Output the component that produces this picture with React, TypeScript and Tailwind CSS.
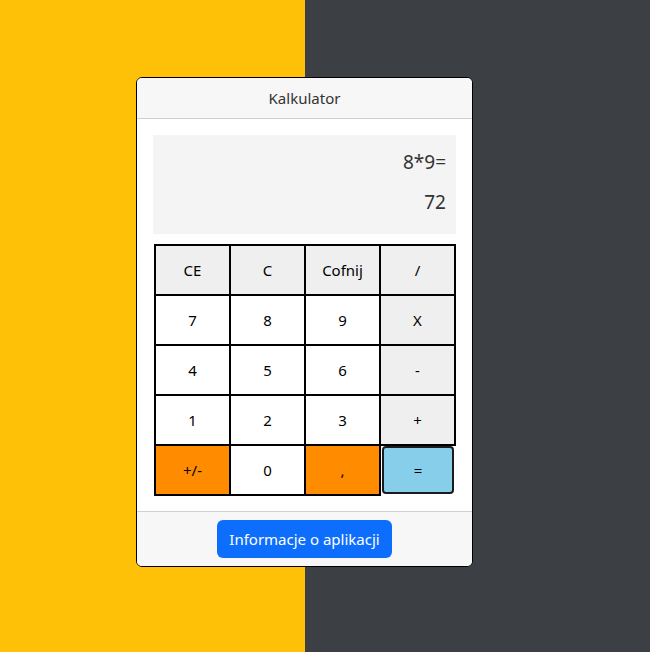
const keys = [
  { label: "CE", kind: "op" },
  { label: "C", kind: "op" },
  { label: "Cofnij", kind: "op" },
  { label: "/", kind: "op" },
  { label: "7", kind: "num" },
  { label: "8", kind: "num" },
  { label: "9", kind: "num" },
  { label: "X", kind: "op" },
  { label: "4", kind: "num" },
  { label: "5", kind: "num" },
  { label: "6", kind: "num" },
  { label: "-", kind: "op" },
  { label: "1", kind: "num" },
  { label: "2", kind: "num" },
  { label: "3", kind: "num" },
  { label: "+", kind: "op" },
  { label: "+/-", kind: "special" },
  { label: "0", kind: "num" },
  { label: ",", kind: "special" },
  { label: "=", kind: "equals" },
];

const kindClass: Record<string, string> = {
  op: "bg-[#efefef] border border-black outline outline-1 outline-black",
  num: "bg-white border border-black outline outline-1 outline-black",
  special: "bg-[#ff8c00] border border-black outline outline-1 outline-black",
  equals: "bg-[#87ceeb] border-2 border-[#1b1b1b] rounded-[4px] m-[1px] ml-[2px]",
};

export default function App() {
  return (
    <div
      className="w-[650px] h-[652px] pl-[136px] pt-[77px] bg-[linear-gradient(to_right,#ffc107_305px,#3c4044_305px)]"
      style={{ fontFamily: '"Noto Sans", "Open Sans", sans-serif' }}
    >
      <div className="w-[337px] h-[490px] flex flex-col bg-white border border-black rounded-[6px] overflow-hidden">
        <div className="h-[41px] flex items-center justify-center bg-[#f7f7f7] border-b border-[#cfcfcf] text-[15px] text-[#333]">
          Kalkulator
        </div>
        <div className="flex flex-col p-4">
          <div className="h-[99px] bg-[#f4f4f4] flex flex-col items-end justify-center gap-[12px] pr-[10px] pb-[6px] text-[19px] text-[#333]">
            <div className="leading-[28px]">8*9=</div>
            <div className="leading-[28px]">72</div>
          </div>
          <div className="grid grid-cols-[repeat(4,75px)] grid-rows-[repeat(5,50px)] mt-[11px] mx-[2px]">
            {keys.map((k) => (
              <button
                key={k.label}
                className={`flex items-center justify-center text-[15px] text-black ${kindClass[k.kind]}`}
              >
                {k.label}
              </button>
            ))}
          </div>
        </div>
        <div className="flex-1 flex items-center justify-center bg-[#f7f7f7] border-t border-[#cfcfcf]">
          <button className="h-[38px] px-3 rounded-[6px] bg-[#0d6efd] text-white text-[15px]">
            Informacje o aplikacji
          </button>
        </div>
      </div>
    </div>
  );
}
